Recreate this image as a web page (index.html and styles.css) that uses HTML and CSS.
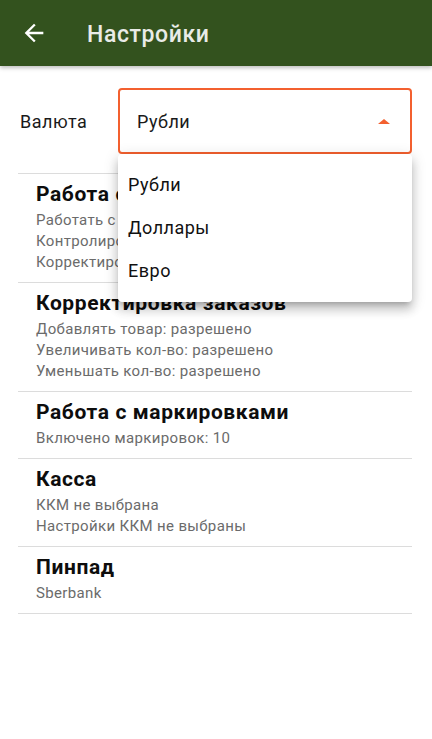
FILE: index.html
```html
<!DOCTYPE html>
<html lang="ru">
<head>
    <meta charset="UTF-8">
    <meta name="viewport" content="width=device-width, initial-scale=1.0">
    <title>Настройки</title>
    <link rel="stylesheet" href="styles.css">
</head>

<body>
  <div class="appbar">
    <svg class="back_icon" viewBox="0 0 24 24" width="28" height="28">
      <path d="M20 11H7.83l5.59-5.59L12 4l-8 8 8 8 1.41-1.41L7.83 13H20v-2z" fill="#ffffff"/>
    </svg>
    <h1 class="appbar_title">Настройки</h1>
  </div>

  <div class="currency_row">
    <span class="currency_label">Валюта</span>
    <div class="select">
      <span>Рубли</span>
      <span class="select_arrow"></span>
      <ul class="dropdown">
        <li>Рубли</li>
        <li>Доллары</li>
        <li>Евро</li>
      </ul>
    </div>
  </div>

  <ul class="settings_list">
    <li class="settings_item">
      <div class="item_title">Работа с заказами</div>
      <div class="item_sub">Работать с заказами: да</div>
      <div class="item_sub">Контролировать количество: да</div>
      <div class="item_sub">Корректировать заказы: да</div>
    </li>
    <li class="settings_item">
      <div class="item_title">Корректировка заказов</div>
      <div class="item_sub">Добавлять товар: разрешено</div>
      <div class="item_sub">Увеличивать кол-во: разрешено</div>
      <div class="item_sub">Уменьшать кол-во: разрешено</div>
    </li>
    <li class="settings_item">
      <div class="item_title">Работа с маркировками</div>
      <div class="item_sub">Включено маркировок: 10</div>
    </li>
    <li class="settings_item">
      <div class="item_title">Касса</div>
      <div class="item_sub">ККМ не выбрана</div>
      <div class="item_sub">Настройки ККМ не выбраны</div>
    </li>
    <li class="settings_item">
      <div class="item_title">Пинпад</div>
      <div class="item_sub">Sberbank</div>
    </li>
  </ul>
</body>
</html>
```

FILE: styles.css
```css
body { margin: 0; font-family: Roboto, "Noto Sans", sans-serif; background: #fff; color: #111; }

.appbar { height: 66px; background: #33521e; display: flex; align-items: center; box-shadow: 0 2px 4px rgba(0, 0, 0, 0.25); position: relative; z-index: 1; }
.back_icon { margin-left: 20px; flex-shrink: 0; }
.appbar_title { margin: 0 0 0 39px; padding-top: 3px; font-size: 23px; font-weight: 500; letter-spacing: 0.6px; color: #e9ebe7; }

.currency_row { display: flex; align-items: center; padding: 22px 20px 0 20px; }
.currency_label { width: 98px; font-size: 18px; letter-spacing: 0.5px; color: #1a1a1a; }
.select { position: relative; flex-grow: 1; height: 66px; box-sizing: border-box; border: 2px solid #f3602f; border-radius: 4px; display: flex; align-items: center; justify-content: space-between; padding: 0 20px 0 17px; font-size: 18px; letter-spacing: 0.5px; color: #1a1a1a; }
.select_arrow { width: 0; height: 0; border-left: 6px solid transparent; border-right: 6px solid transparent; border-bottom: 5px solid #f3602f; }

.dropdown { position: absolute; top: calc(100% + 2px); left: -2px; right: -2px; margin: 0; padding: 9px 0 10px; list-style: none; background: #fff; border-radius: 4px; z-index: 2;
  box-shadow: 0 5px 5px -3px rgba(0, 0, 0, 0.2), 0 8px 10px 1px rgba(0, 0, 0, 0.14), 0 3px 14px 2px rgba(0, 0, 0, 0.12); }
.dropdown > li { height: 43px; line-height: 43px; padding-left: 10px; font-size: 18px; color: #111; }

.settings_list { list-style: none; margin: 19px 20px 0 18px; padding: 0; border-top: 1px solid #dcdcdc; }
.settings_item { padding: 5px 0 9px 18px; border-bottom: 1px solid #dcdcdc; }
.item_title { font-size: 21px; font-weight: 700; line-height: 31px; letter-spacing: 0.6px; color: #0d0d0d; }
.item_sub { font-size: 15px; line-height: 21px; letter-spacing: 0.35px; color: #6b6b6b; }
```
